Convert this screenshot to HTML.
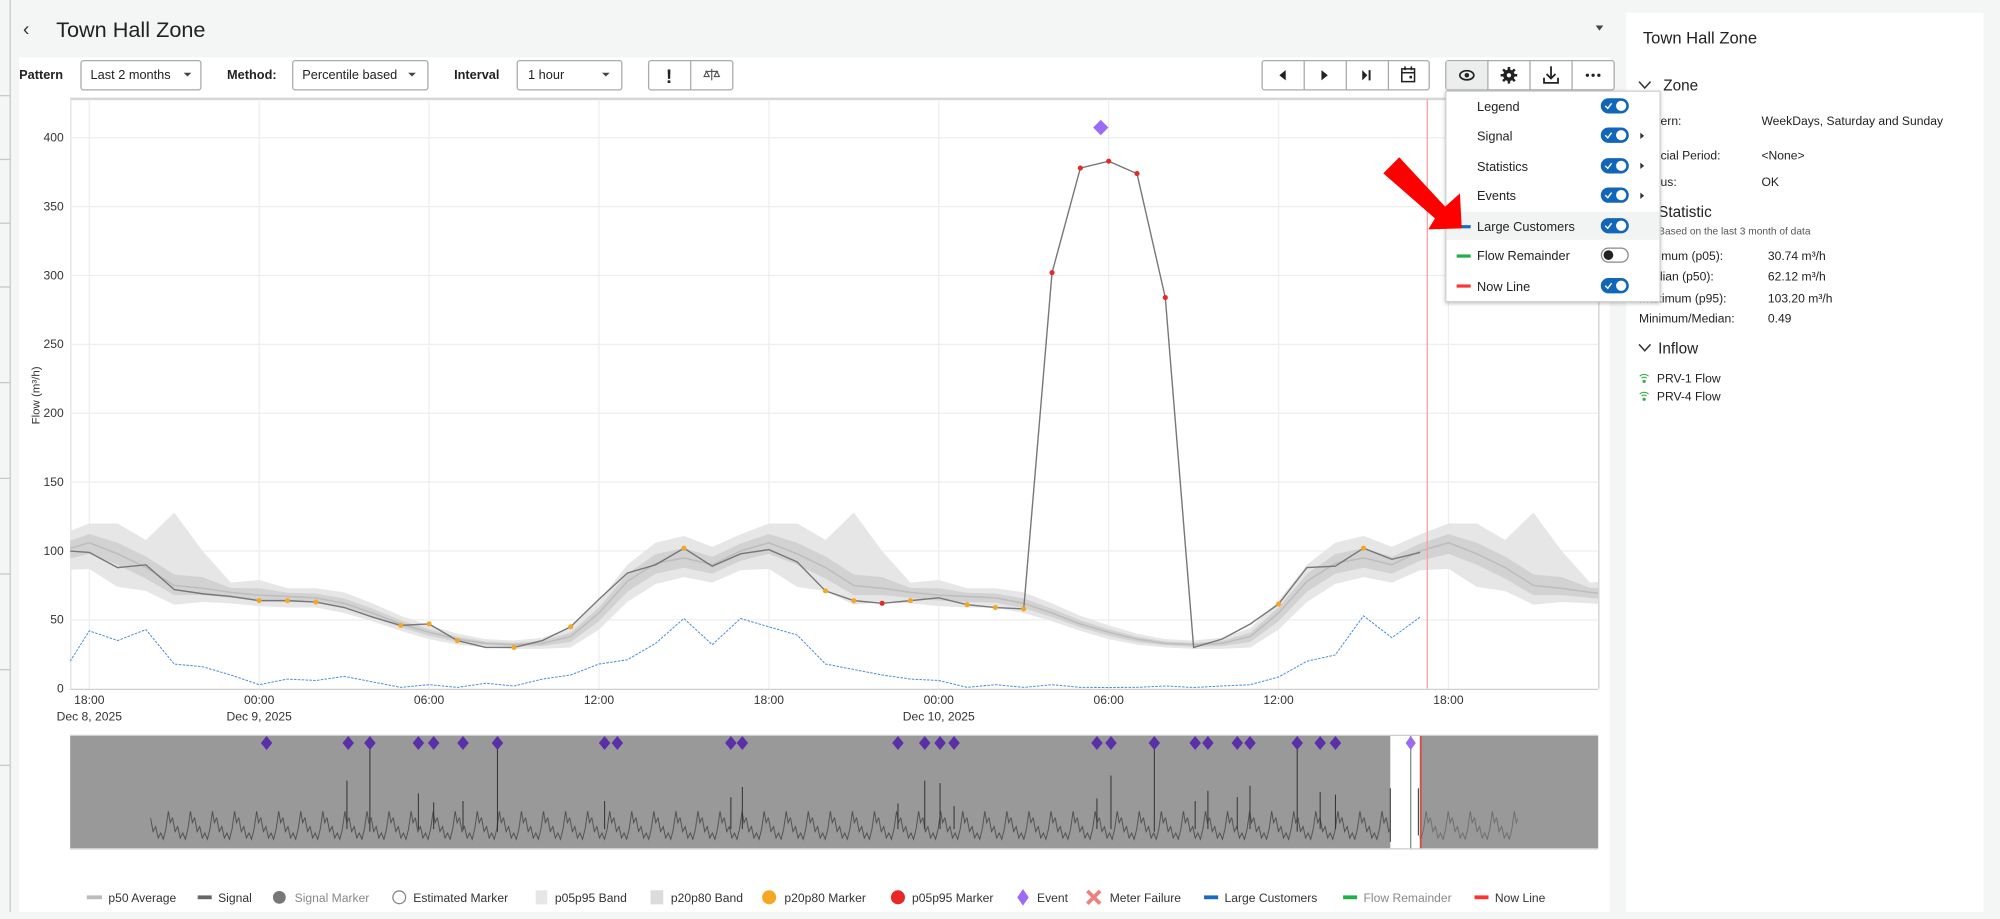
<!DOCTYPE html>
<html><head><meta charset="utf-8"><style>
html,body{margin:0;padding:0;background:#f4f5f5;width:2000px;height:919px;overflow:hidden}
svg{display:block;font-family:"Liberation Sans",sans-serif}
</style></head><body>
<svg width="2000" height="919" viewBox="0 0 1568 720.5" preserveAspectRatio="none" xmlns="http://www.w3.org/2000/svg">
<defs>
<clipPath id="plot"><rect x="55" y="78" width="1198" height="462"/></clipPath>
<pattern id="wave" x="118" y="0" width="17.3" height="720" patternUnits="userSpaceOnUse">
<path d="M0,641 L2,652 L4,648 L6,657 L8,653 L10,658 L12,650 L14,636 L15.5,645 L17.3,641" fill="none" stroke="#4a4a4a" stroke-width="0.7"/>
</pattern>
<filter id="sh" x="-10%" y="-10%" width="120%" height="130%"><feDropShadow dx="0" dy="1" stdDeviation="1.5" flood-opacity="0.25"/></filter>
</defs>
<rect width="1568" height="720.5" fill="#f4f5f5"/>
<line x1="8" y1="0" x2="8" y2="715" stroke="#c8c8c8" stroke-width="1"/>
<g stroke="#c8c8c8"><line x1="0" y1="75" x2="8" y2="75"/><line x1="0" y1="125" x2="8" y2="125"/><line x1="0" y1="175" x2="8" y2="175"/><line x1="0" y1="225" x2="8" y2="225"/><line x1="0" y1="300" x2="8" y2="300"/><line x1="0" y1="375" x2="8" y2="375"/><line x1="0" y1="450" x2="8" y2="450"/><line x1="0" y1="525" x2="8" y2="525"/><line x1="0" y1="600" x2="8" y2="600"/></g>
<text x="18" y="28" font-size="15" fill="#333">‹</text>
<text x="44" y="29" font-size="17" fill="#222">Town Hall Zone</text>
<path d="M1251,20 L1257,20 L1254,24Z" fill="#444"/>
<rect x="15" y="45" width="1247" height="670" fill="#fff"/>
<g font-size="10" fill="#222">
<text x="15" y="62" font-weight="bold">Pattern</text>
<rect x="63.5" y="47.5" width="94" height="23" rx="2" fill="#fff" stroke="#aaa"/>
<text x="71" y="62">Last 2 months</text><path d="M144,57 L150,57 L147,60Z" fill="#444"/>
<text x="178" y="62" font-weight="bold">Method:</text>
<rect x="229.5" y="47.5" width="106" height="23" rx="2" fill="#fff" stroke="#aaa"/>
<text x="237" y="62">Percentile based</text><path d="M320,57 L326,57 L323,60Z" fill="#444"/>
<text x="356" y="62" font-weight="bold">Interval</text>
<rect x="405.5" y="47.5" width="82" height="23" rx="2" fill="#fff" stroke="#aaa"/>
<text x="414" y="62">1 hour</text><path d="M472,57 L478,57 L475,60Z" fill="#444"/>
<rect x="508.5" y="47.5" width="66" height="23" rx="2" fill="#fff" stroke="#aaa"/>
<line x1="541.5" y1="47.5" x2="541.5" y2="70.5" stroke="#aaa"/>
<text x="522" y="65" font-size="15" font-weight="bold">!</text>
<g stroke="#555" stroke-width="0.9" fill="none"><line x1="558" y1="54" x2="558" y2="63"/><line x1="553" y1="56" x2="563" y2="56"/><path d="M552,60 L554,56 L556,60Z M560,60 L562,56 L564,60Z"/></g>
</g>
<rect x="989.5" y="47.5" width="131" height="23" rx="2" fill="#fff" stroke="#aaa"/>
<g stroke="#aaa"><line x1="1022.5" y1="47.5" x2="1022.5" y2="70.5"/><line x1="1055.5" y1="47.5" x2="1055.5" y2="70.5"/><line x1="1088.5" y1="47.5" x2="1088.5" y2="70.5"/></g>
<path d="M1008,55 L1003,59 L1008,63Z" fill="#222"/>
<path d="M1036,55 L1041,59 L1036,63Z" fill="#222"/>
<path d="M1068,55 L1072,59 L1068,63Z M1073,55 h1.5 v8 h-1.5Z" fill="#222"/>
<g fill="none" stroke="#222" stroke-width="1.2"><rect x="1099" y="54" width="10" height="10"/><line x1="1099" y1="57" x2="1109" y2="57"/><line x1="1101.5" y1="52" x2="1101.5" y2="55"/><line x1="1106.5" y1="52" x2="1106.5" y2="55"/></g><rect x="1105" y="59.5" width="2" height="2" fill="#222"/>
<rect x="1133.5" y="47.5" width="132" height="23" rx="2" fill="#fff" stroke="#aaa"/>
<rect x="1134" y="48" width="32" height="22" fill="#eceded"/>
<g stroke="#aaa"><line x1="1166.5" y1="47.5" x2="1166.5" y2="70.5"/><line x1="1199.5" y1="47.5" x2="1199.5" y2="70.5"/><line x1="1232.5" y1="47.5" x2="1232.5" y2="70.5"/></g>
<ellipse cx="1150" cy="59" rx="5.5" ry="3.6" fill="none" stroke="#222" stroke-width="1.3"/><circle cx="1150" cy="59" r="1.8" fill="#222"/>
<circle cx="1183" cy="59" r="4.5" fill="#222"/>
<g stroke="#222" stroke-width="2"><line x1="1183" y1="52.5" x2="1183" y2="65.5"/><line x1="1176.5" y1="59" x2="1189.5" y2="59"/><line x1="1178.4" y1="54.4" x2="1187.6" y2="63.6"/><line x1="1178.4" y1="63.6" x2="1187.6" y2="54.4"/></g><circle cx="1183" cy="59" r="1.7" fill="#fff"/>
<g stroke="#222" stroke-width="1.4" fill="none"><line x1="1216" y1="52" x2="1216" y2="61"/><path d="M1212.5,58 L1216,61.5 L1219.5,58"/><path d="M1210.5,61 v4 h11 v-4"/></g>
<g fill="#222"><circle cx="1244.5" cy="59" r="1.3"/><circle cx="1249" cy="59" r="1.3"/><circle cx="1253.5" cy="59" r="1.3"/></g>
<line x1="55" y1="77.5" x2="1253" y2="77.5" stroke="#d6d6d6" stroke-width="2"/>
<line x1="55.5" y1="78" x2="55.5" y2="540" stroke="#e2e2e2"/>
<line x1="1253.5" y1="78" x2="1253.5" y2="540" stroke="#cfcfcf"/>
<g stroke="#eeeeee"><line x1="55" y1="108" x2="1253" y2="108"/><line x1="55" y1="162" x2="1253" y2="162"/><line x1="55" y1="216" x2="1253" y2="216"/><line x1="55" y1="270" x2="1253" y2="270"/><line x1="55" y1="324" x2="1253" y2="324"/><line x1="55" y1="378" x2="1253" y2="378"/><line x1="55" y1="432" x2="1253" y2="432"/><line x1="55" y1="486" x2="1253" y2="486"/>
<line x1="70" y1="78" x2="70" y2="540"/><line x1="203.2" y1="78" x2="203.2" y2="540"/><line x1="336.4" y1="78" x2="336.4" y2="540"/><line x1="469.6" y1="78" x2="469.6" y2="540"/><line x1="602.8" y1="78" x2="602.8" y2="540"/><line x1="736" y1="78" x2="736" y2="540"/><line x1="869.2" y1="78" x2="869.2" y2="540"/><line x1="1002.4" y1="78" x2="1002.4" y2="540"/><line x1="1135.6" y1="78" x2="1135.6" y2="540"/></g>
<line x1="55" y1="540.5" x2="1253" y2="540.5" stroke="#cfcfcf"/>
<g font-size="9.5" fill="#333" text-anchor="end"><text x="50" y="111">400</text><text x="50" y="165">350</text><text x="50" y="219">300</text><text x="50" y="273">250</text><text x="50" y="327">200</text><text x="50" y="381">150</text><text x="50" y="435">100</text><text x="50" y="489">50</text><text x="50" y="543">0</text></g>
<text transform="translate(31,310) rotate(-90)" font-size="9" fill="#333" text-anchor="middle">Flow (m³/h)</text>
<g font-size="9.5" fill="#333" text-anchor="middle"><text x="70" y="552">18:00</text><text x="203.2" y="552">00:00</text><text x="336.4" y="552">06:00</text><text x="469.6" y="552">12:00</text><text x="602.8" y="552">18:00</text><text x="736" y="552">00:00</text><text x="869.2" y="552">06:00</text><text x="1002.4" y="552">12:00</text><text x="1135.6" y="552">18:00</text>
<text x="70" y="565">Dec 8, 2025</text><text x="203.2" y="565">Dec 9, 2025</text><text x="736" y="565">Dec 10, 2025</text></g>
<g clip-path="url(#plot)">
<path id="outer" fill="#e6e6e6" d=""/>
<path id="inner" fill="#d2d2d2" d=""/>
<path id="p50" fill="none" stroke="#bdbdbd" stroke-width="1.2" d=""/>
<line x1="1119" y1="78" x2="1119" y2="540" stroke="#f7a0a0" stroke-width="1"/>
<polyline fill="none" stroke="#4a90d9" stroke-width="0.8" stroke-dasharray="2,1" points="55,518.4 70,494.6 92.2,502.2 114.4,493.6 136.6,520.6 158.8,522.7 181,529.2 203.2,536.8 225.4,532.4 247.6,533.5 269.8,530.3 292,534.6 314.2,538.9 336.4,536.8 358.6,538.9 380.8,535.7 403,537.8 425.2,532.4 447.4,529.2 469.6,520.6 491.8,517.3 514,504.4 536.2,484.9 558.4,505.4 580.6,484.9 602.8,491.4 625,497.9 647.2,520.6 669.4,524.9 691.6,529.2 713.8,532.4 736,533.5 758.2,538.9 780.4,536.8 802.6,538.9 824.8,536.8 847,538.9 869.2,539 891.4,538.9 913.6,537.8 935.8,539 958,537.8 980.2,536.8 1002.4,530.8 1024.6,518.4 1046.8,513.5 1069,482.8 1091.2,500 1113.4,483.8"/>
<polyline fill="none" stroke="#777" stroke-width="1.1" points="55,432 70,433.1 92.2,445 114.4,442.8 136.6,462.2 158.8,465.5 181,467.6 203.2,470.9 225.4,470.9 247.6,472 269.8,476.3 292,483.8 314.2,490.3 336.4,489.2 358.6,502.2 380.8,507.6 403,507.6 425.2,502.2 447.4,491.4 469.6,469.8 491.8,449.3 514,442.8 536.2,429.8 558.4,443.9 580.6,434.2 602.8,430.9 625,440.6 647.2,463.3 669.4,470.9 691.6,473 713.8,470.9 736,468.7 758.2,474.1 780.4,476.3 802.6,477.4 824.8,213.8 847,131.8 869.2,126.4 891.4,136.1 913.6,233.3 935.8,507.6 958,501.1 980.2,489.2 1002.4,473.6 1024.6,445 1046.8,443.9 1069,429.8 1091.2,438.5 1113.4,433.1"/>
<g fill="#f5a623"><circle cx="203.2" cy="470.9" r="2"/><circle cx="225.4" cy="470.9" r="2"/><circle cx="247.6" cy="472" r="2"/><circle cx="314.2" cy="490.3" r="2"/><circle cx="336.4" cy="489.2" r="2"/><circle cx="358.6" cy="502.2" r="2"/><circle cx="403" cy="507.6" r="2"/><circle cx="447.4" cy="491.4" r="2"/><circle cx="536.2" cy="429.8" r="2"/><circle cx="647.2" cy="463.3" r="2"/><circle cx="669.4" cy="470.9" r="2"/><circle cx="713.8" cy="470.9" r="2"/><circle cx="758.2" cy="474.1" r="2"/><circle cx="780.4" cy="476.3" r="2"/><circle cx="802.6" cy="477.4" r="2"/><circle cx="1002.4" cy="473.6" r="2"/><circle cx="1069" cy="429.8" r="2"/></g>
<g fill="#e82727"><circle cx="691.6" cy="473" r="2"/><circle cx="824.8" cy="213.8" r="2"/><circle cx="847" cy="131.8" r="2"/><circle cx="869.2" cy="126.4" r="2"/><circle cx="891.4" cy="136.1" r="2"/><circle cx="913.6" cy="233.3" r="2"/></g>
<path d="M863,94 L869,100 L863,106 L857,100Z" fill="#9b6bf5"/>
</g>
<rect x="55" y="577" width="1198" height="88" fill="#999"/>
<line x1="55" y1="576.5" x2="1253" y2="576.5" stroke="#ccc"/><line x1="55" y1="665.5" x2="1253" y2="665.5" stroke="#ccc"/>
<rect x="1090" y="577" width="23" height="88" fill="#fff"/>
<rect x="118" y="630" width="972" height="34" fill="url(#wave)"/>
<rect x="1113" y="630" width="77" height="34" fill="url(#wave)" opacity="0.6"/>
<g stroke="#333" stroke-width="0.8"><line x1="290" y1="583" x2="290" y2="652"/><line x1="390" y1="583" x2="390" y2="652"/><line x1="905" y1="583" x2="905" y2="652"/><line x1="1017" y1="583" x2="1017" y2="652"/>
<line x1="272" y1="612" x2="272" y2="650"/><line x1="328" y1="622" x2="328" y2="650"/><line x1="340" y1="629" x2="340" y2="650"/><line x1="363" y1="628" x2="363" y2="650"/><line x1="474" y1="628" x2="474" y2="650"/><line x1="573" y1="625" x2="573" y2="650"/><line x1="582" y1="617" x2="582" y2="650"/><line x1="704" y1="630" x2="704" y2="650"/><line x1="725" y1="612" x2="725" y2="650"/><line x1="737" y1="614" x2="737" y2="650"/><line x1="748" y1="632" x2="748" y2="650"/><line x1="860" y1="626" x2="860" y2="650"/><line x1="871" y1="608" x2="871" y2="650"/><line x1="937" y1="628" x2="937" y2="650"/><line x1="947" y1="620" x2="947" y2="650"/><line x1="970" y1="625" x2="970" y2="650"/><line x1="980" y1="616" x2="980" y2="650"/><line x1="1035" y1="621" x2="1035" y2="650"/><line x1="1047" y1="623" x2="1047" y2="650"/>
<line x1="1090" y1="618" x2="1090" y2="660"/><line x1="1112" y1="618" x2="1112" y2="655"/></g>
<line x1="1106" y1="577" x2="1106" y2="665" stroke="#888"/><line x1="1114" y1="577" x2="1114" y2="665" stroke="#e33"/>
<g fill="#5a30a8" id="navd"></g>
<path d="M1106,577 L1110,582.5 L1106,588 L1102,582.5Z" fill="#9b6bf5"/>
<g font-size="9.5" fill="#333">
<rect x="68" y="702" width="12" height="3" fill="#bbb"/><text x="85" y="707">p50 Average</text>
<rect x="155" y="702" width="11" height="3" fill="#666"/><text x="171" y="707">Signal</text>
<circle cx="219" cy="703.5" r="5" fill="#777"/><text x="231" y="707" fill="#888">Signal Marker</text>
<circle cx="313" cy="703.5" r="5" fill="#fff" stroke="#888"/><text x="324" y="707">Estimated Marker</text>
<rect x="420" y="698" width="9" height="11" fill="#e6e6e6"/><text x="435" y="707">p05p95 Band</text>
<rect x="510" y="698" width="10" height="11" fill="#dcdcdc"/><text x="526" y="707">p20p80 Band</text>
<circle cx="603" cy="703.5" r="5.5" fill="#f5a623"/><text x="615" y="707">p20p80 Marker</text>
<circle cx="704" cy="703.5" r="5.5" fill="#e82727"/><text x="715" y="707">p05p95 Marker</text>
<path d="M802,697 L806.5,703.5 L802,710 L797.5,703.5Z" fill="#9b6bf5"/><text x="813" y="707">Event</text>
<path d="M852.5,698.5 L862.5,708.5 M862.5,698.5 L852.5,708.5" stroke="#f08080" stroke-width="3"/><text x="870" y="707">Meter Failure</text>
<rect x="944" y="702" width="11" height="3" fill="#1a6bbf"/><text x="960" y="707">Large Customers</text>
<rect x="1053" y="702" width="11" height="3" fill="#1db045"/><text x="1069" y="707" fill="#888">Flow Remainder</text>
<rect x="1156" y="702" width="11" height="3" fill="#f33"/><text x="1172" y="707">Now Line</text>
</g>
<rect x="1275" y="10" width="280" height="705" fill="#fff"/>
<g fill="#222">
<text x="1288" y="34" font-size="13">Town Hall Zone</text>
<path d="M1285,64 L1289.5,69 L1294,64" fill="none" stroke="#333" stroke-width="1.2"/><text x="1304" y="71" font-size="12">Zone</text>
<g font-size="9.5"><text x="1285" y="98">Pattern:</text><text x="1381" y="98">WeekDays, Saturday and Sunday</text>
<text x="1285" y="125">Special Period:</text><text x="1381" y="125">&lt;None&gt;</text>
<text x="1285" y="146">Status:</text><text x="1381" y="146">OK</text></g>
<path d="M1285,163 L1289.5,168 L1294,163" fill="none" stroke="#333" stroke-width="1.2"/><text x="1300" y="170" font-size="12">Statistic</text>
<text x="1300" y="184" font-size="8" fill="#555">Based on the last 3 month of data</text>
<g font-size="9.5"><text x="1285" y="204">Minimum (p05):</text><text x="1386" y="204">30.74 m³/h</text>
<text x="1285" y="220">Median (p50):</text><text x="1386" y="220">62.12 m³/h</text>
<text x="1285" y="237">Maximum (p95):</text><text x="1386" y="237">103.20 m³/h</text>
<text x="1285" y="253">Minimum/Median:</text><text x="1386" y="253">0.49</text></g>
<path d="M1285,270 L1289.5,275 L1294,270" fill="none" stroke="#333" stroke-width="1.2"/><text x="1300" y="277" font-size="12">Inflow</text>
<g font-size="9.5"><text x="1299" y="300">PRV-1 Flow</text><text x="1299" y="314">PRV-4 Flow</text></g>
</g>
<g fill="none" stroke="#3cb04a" stroke-width="0.9"><path d="M1285.5,295 a5,5 0 0 1 7,0 M1287,296.5 a3,3 0 0 1 4,0"/><path d="M1285.5,309 a5,5 0 0 1 7,0 M1287,310.5 a3,3 0 0 1 4,0"/></g>
<circle cx="1289" cy="299" r="1.3" fill="#3cb04a"/><circle cx="1289" cy="313" r="1.3" fill="#3cb04a"/>
<rect x="1133.5" y="71.5" width="168" height="165" fill="#fff" stroke="#d0d0d0" filter="url(#sh)"/>
<rect x="1134" y="166" width="167" height="22" fill="#f2f3f3"/>
<g font-size="10" fill="#222"><text x="1158" y="87">Legend</text><text x="1158" y="110">Signal</text><text x="1158" y="134">Statistics</text><text x="1158" y="157">Events</text><text x="1158" y="181">Large Customers</text><text x="1158" y="204">Flow Remainder</text><text x="1158" y="228">Now Line</text></g>
<rect x="1142" y="176.5" width="11" height="2.5" fill="#1a6bbf"/><rect x="1142" y="199.5" width="11" height="2.5" fill="#1db045"/><rect x="1142" y="223" width="11" height="2.5" fill="#f33"/>
<g>
<g transform="translate(1255,77)"><rect width="22" height="12" rx="6" fill="#1166b8"/><circle cx="16" cy="6" r="4" fill="#fff"/><path d="M3.5,6 L5.5,8 L8.5,4" stroke="#fff" stroke-width="1.1" fill="none"/></g>
<g transform="translate(1255,100)"><rect width="22" height="12" rx="6" fill="#1166b8"/><circle cx="16" cy="6" r="4" fill="#fff"/><path d="M3.5,6 L5.5,8 L8.5,4" stroke="#fff" stroke-width="1.1" fill="none"/></g>
<g transform="translate(1255,124)"><rect width="22" height="12" rx="6" fill="#1166b8"/><circle cx="16" cy="6" r="4" fill="#fff"/><path d="M3.5,6 L5.5,8 L8.5,4" stroke="#fff" stroke-width="1.1" fill="none"/></g>
<g transform="translate(1255,147)"><rect width="22" height="12" rx="6" fill="#1166b8"/><circle cx="16" cy="6" r="4" fill="#fff"/><path d="M3.5,6 L5.5,8 L8.5,4" stroke="#fff" stroke-width="1.1" fill="none"/></g>
<g transform="translate(1255,171)"><rect width="22" height="12" rx="6" fill="#1166b8"/><circle cx="16" cy="6" r="4" fill="#fff"/><path d="M3.5,6 L5.5,8 L8.5,4" stroke="#fff" stroke-width="1.1" fill="none"/></g>
<g transform="translate(1255,194)"><rect x="0.5" y="0.5" width="21" height="11" rx="5.5" fill="#fff" stroke="#888"/><circle cx="6" cy="6" r="3.8" fill="#222"/></g>
<g transform="translate(1255,218)"><rect width="22" height="12" rx="6" fill="#1166b8"/><circle cx="16" cy="6" r="4" fill="#fff"/><path d="M3.5,6 L5.5,8 L8.5,4" stroke="#fff" stroke-width="1.1" fill="none"/></g>
</g>
<g fill="#333"><path d="M1286,104 L1289,106.5 L1286,109Z"/><path d="M1286,127.5 L1289,130 L1286,132.5Z"/><path d="M1286,151 L1289,153.5 L1286,156Z"/></g>
<polygon points="1097,123.3 1133,162 1144.6,151.6 1146,179 1119.8,179.8 1125,171.2 1084.5,135.9" fill="#ff0000"/>
</svg>
<script>
(function(){
var p50=[106,98,88,75,73,70,68,67,66,62,55,47,41,36,33,32,33,38,55,78,91,95,90,100];
var up=[14,22,20,53,27,7,11,6,7,8,7,6,5,4,3,3,4,6,9,12,15,16,13,12];
var lo=[19,24,17,14,10,8,8,8,7,7,6,5,5,4,3,3,4,8,12,15,15,14,13,14];
function v(a,h){var i=((Math.floor(h)%24)+24)%24,j=(i+1)%24,f=h-Math.floor(h);return a[i]*(1-f)+a[j]*f;}
function X(h){return 70+22.2*h;} function Y(val){return 540-1.08*val;}
var hs=[];for(var h=-1;h<=54;h++)hs.push(h);
function band(fu,fl){var a=[],b=[];hs.forEach(function(h){a.push(X(h).toFixed(1)+','+Y(fu(h)).toFixed(1));b.unshift(X(h).toFixed(1)+','+Y(fl(h)).toFixed(1));});return 'M'+a.join(' L')+' L'+b.join(' L')+'Z';}
document.getElementById('outer').setAttribute('d',band(function(h){return v(p50,h)+v(up,h);},function(h){return v(p50,h)-v(lo,h);}));
document.getElementById('inner').setAttribute('d',band(function(h){return v(p50,h)+Math.min(8,v(up,h)*0.45);},function(h){return v(p50,h)-Math.min(8,v(lo,h)*0.5);}));
document.getElementById('p50').setAttribute('d','M'+hs.map(function(h){return X(h).toFixed(1)+','+Y(v(p50,h)).toFixed(1);}).join(' L'));
var xs=[209,273,290,328,340,363,390,474,484,573,582,704,725,737,748,860,871,905,937,947,970,980,1017,1035,1047];
var g=document.getElementById('navd'),s='';
xs.forEach(function(x){s+='<path d="M'+x+',577 L'+(x+4.5)+',582.5 L'+x+',588 L'+(x-4.5)+',582.5Z"/>';});
g.innerHTML=s;
})();
</script>
</body></html>
